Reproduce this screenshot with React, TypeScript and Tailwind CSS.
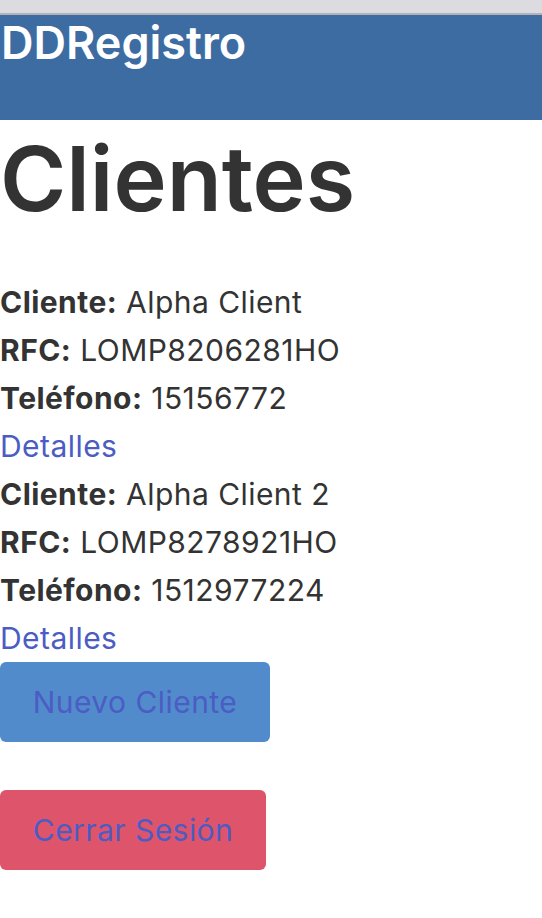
const clients = [
  { name: "Alpha Client", rfc: "LOMP8206281HO", phone: "15156772" },
  { name: "Alpha Client 2", rfc: "LOMP8278921HO", phone: "1512977224" },
];

export default function App() {
  return (
    <div className="min-h-[918px] bg-white font-['Inter','Liberation_Sans',sans-serif] text-[#333333]">
      <div className="h-[15px] bg-[#dcdce0] border-b-2 border-[#b3b3b7]" />
      <header className="h-[105px] bg-[#3d6ca3]">
        <h2 className="text-[45px] leading-[56px] font-semibold text-white pl-[1px]">DDRegistro</h2>
      </header>

      <h1 className="text-[90px] leading-[110px] font-semibold mt-[4px] mb-[44px]">Clientes</h1>

      <div className="text-[30px] leading-[48px] tracking-[0.015em]">
        {clients.map((c, i) => (
          <div key={i}>
            <div>
              <b>Cliente:</b> {c.name}
            </div>
            <div>
              <b>RFC:</b> {c.rfc}
            </div>
            <div>
              <b>Teléfono:</b> {c.phone}
            </div>
            <a className="block text-[#4b5cc4]" href="#">
              Detalles
            </a>
          </div>
        ))}
      </div>

      <div className="flex flex-col items-start gap-[48px]">
        <button className="w-[270px] h-[80px] rounded-md bg-[#528bcb] text-[30px] tracking-[0.015em] text-[#4b5cc4]">
          Nuevo Cliente
        </button>
        <button className="w-[266px] h-[80px] rounded-md bg-[#de546b] text-[30px] tracking-[0.015em] text-[#4b5cc4]">
          Cerrar Sesión
        </button>
      </div>
    </div>
  );
}
